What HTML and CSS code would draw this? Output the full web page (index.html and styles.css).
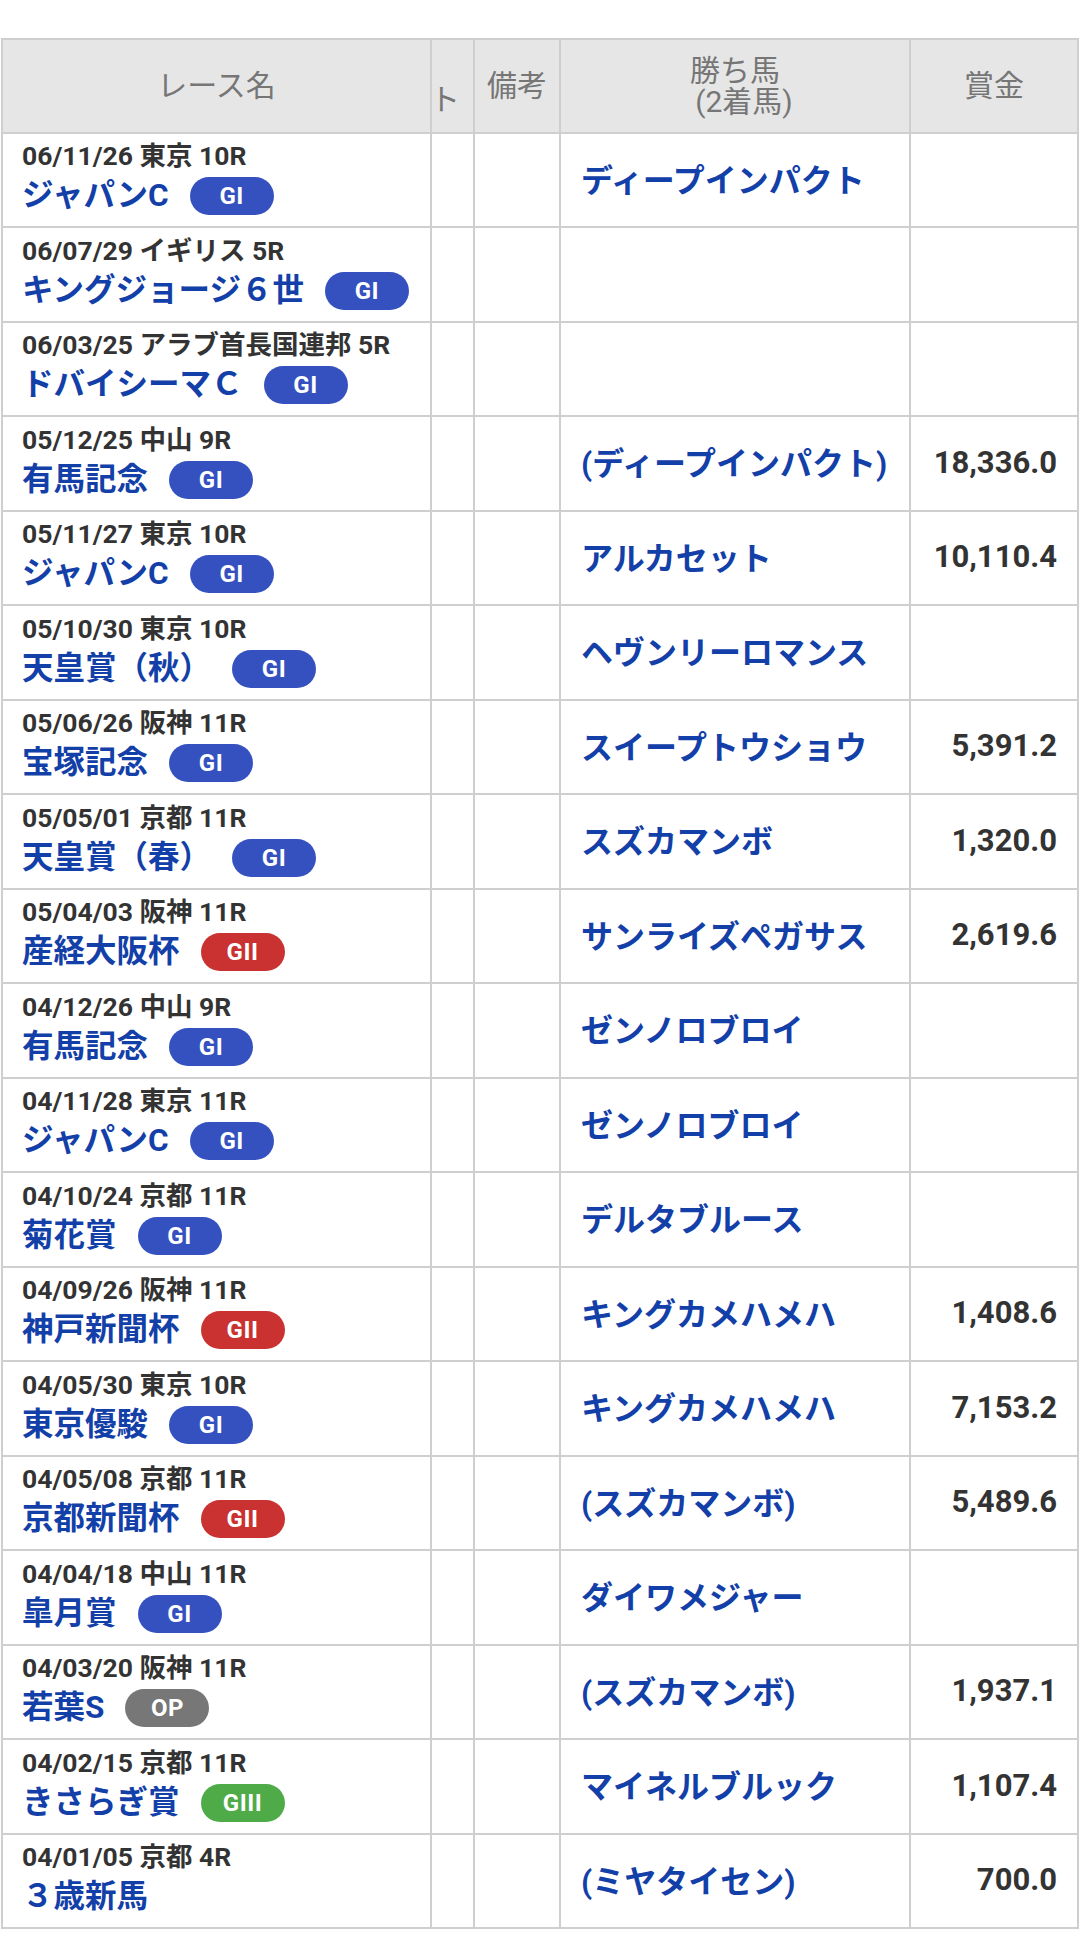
FILE: index.html
```html
<!DOCTYPE html>
<html lang="ja">
<head>
<meta charset="utf-8">
<title>レース成績</title>
<link rel="stylesheet" href="styles.css">
</head>
<body>
<div class="tbl">
  <div class="th">レース名</div>
  <div class="th th-clip"><span class="clip-glyph">ト</span></div>
  <div class="th">備考</div>
  <div class="th th-2line"><span>勝ち馬</span><span class="sub">(2着馬)</span></div>
  <div class="th">賞金</div>

  <div class="td race"><div class="date">06/11/26 東京 10R</div><div class="name"><span>ジャパンC</span><span class="badge g1">GI</span></div></div>
  <div class="td"></div><div class="td"></div>
  <div class="td horse">ディープインパクト</div>
  <div class="td prize"></div>

  <div class="td race"><div class="date">06/07/29 イギリス 5R</div><div class="name"><span>キングジョージ６世</span><span class="badge g1">GI</span></div></div>
  <div class="td"></div><div class="td"></div>
  <div class="td horse"></div>
  <div class="td prize"></div>

  <div class="td race"><div class="date">06/03/25 アラブ首長国連邦 5R</div><div class="name"><span>ドバイシーマＣ</span><span class="badge g1">GI</span></div></div>
  <div class="td"></div><div class="td"></div>
  <div class="td horse"></div>
  <div class="td prize"></div>

  <div class="td race"><div class="date">05/12/25 中山 9R</div><div class="name"><span>有馬記念</span><span class="badge g1">GI</span></div></div>
  <div class="td"></div><div class="td"></div>
  <div class="td horse">(ディープインパクト)</div>
  <div class="td prize">18,336.0</div>

  <div class="td race"><div class="date">05/11/27 東京 10R</div><div class="name"><span>ジャパンC</span><span class="badge g1">GI</span></div></div>
  <div class="td"></div><div class="td"></div>
  <div class="td horse">アルカセット</div>
  <div class="td prize">10,110.4</div>

  <div class="td race"><div class="date">05/10/30 東京 10R</div><div class="name"><span>天皇賞（秋）</span><span class="badge g1">GI</span></div></div>
  <div class="td"></div><div class="td"></div>
  <div class="td horse">ヘヴンリーロマンス</div>
  <div class="td prize"></div>

  <div class="td race"><div class="date">05/06/26 阪神 11R</div><div class="name"><span>宝塚記念</span><span class="badge g1">GI</span></div></div>
  <div class="td"></div><div class="td"></div>
  <div class="td horse">スイープトウショウ</div>
  <div class="td prize">5,391.2</div>

  <div class="td race"><div class="date">05/05/01 京都 11R</div><div class="name"><span>天皇賞（春）</span><span class="badge g1">GI</span></div></div>
  <div class="td"></div><div class="td"></div>
  <div class="td horse">スズカマンボ</div>
  <div class="td prize">1,320.0</div>

  <div class="td race"><div class="date">05/04/03 阪神 11R</div><div class="name"><span>産経大阪杯</span><span class="badge g2">GII</span></div></div>
  <div class="td"></div><div class="td"></div>
  <div class="td horse">サンライズペガサス</div>
  <div class="td prize">2,619.6</div>

  <div class="td race"><div class="date">04/12/26 中山 9R</div><div class="name"><span>有馬記念</span><span class="badge g1">GI</span></div></div>
  <div class="td"></div><div class="td"></div>
  <div class="td horse">ゼンノロブロイ</div>
  <div class="td prize"></div>

  <div class="td race"><div class="date">04/11/28 東京 11R</div><div class="name"><span>ジャパンC</span><span class="badge g1">GI</span></div></div>
  <div class="td"></div><div class="td"></div>
  <div class="td horse">ゼンノロブロイ</div>
  <div class="td prize"></div>

  <div class="td race"><div class="date">04/10/24 京都 11R</div><div class="name"><span>菊花賞</span><span class="badge g1">GI</span></div></div>
  <div class="td"></div><div class="td"></div>
  <div class="td horse">デルタブルース</div>
  <div class="td prize"></div>

  <div class="td race"><div class="date">04/09/26 阪神 11R</div><div class="name"><span>神戸新聞杯</span><span class="badge g2">GII</span></div></div>
  <div class="td"></div><div class="td"></div>
  <div class="td horse">キングカメハメハ</div>
  <div class="td prize">1,408.6</div>

  <div class="td race"><div class="date">04/05/30 東京 10R</div><div class="name"><span>東京優駿</span><span class="badge g1">GI</span></div></div>
  <div class="td"></div><div class="td"></div>
  <div class="td horse">キングカメハメハ</div>
  <div class="td prize">7,153.2</div>

  <div class="td race"><div class="date">04/05/08 京都 11R</div><div class="name"><span>京都新聞杯</span><span class="badge g2">GII</span></div></div>
  <div class="td"></div><div class="td"></div>
  <div class="td horse">(スズカマンボ)</div>
  <div class="td prize">5,489.6</div>

  <div class="td race"><div class="date">04/04/18 中山 11R</div><div class="name"><span>皐月賞</span><span class="badge g1">GI</span></div></div>
  <div class="td"></div><div class="td"></div>
  <div class="td horse">ダイワメジャー</div>
  <div class="td prize"></div>

  <div class="td race"><div class="date">04/03/20 阪神 11R</div><div class="name"><span>若葉S</span><span class="badge op">OP</span></div></div>
  <div class="td"></div><div class="td"></div>
  <div class="td horse">(スズカマンボ)</div>
  <div class="td prize">1,937.1</div>

  <div class="td race"><div class="date">04/02/15 京都 11R</div><div class="name"><span>きさらぎ賞</span><span class="badge g3">GIII</span></div></div>
  <div class="td"></div><div class="td"></div>
  <div class="td horse">マイネルブルック</div>
  <div class="td prize">1,107.4</div>

  <div class="td race"><div class="date">04/01/05 京都 4R</div><div class="name"><span>３歳新馬</span></div></div>
  <div class="td"></div><div class="td"></div>
  <div class="td horse">(ミヤタイセン)</div>
  <div class="td prize">700.0</div>
</div>
</body>
</html>
```
FILE: styles.css
```css
html, body {
  margin: 0;
  padding: 0;
  background: #ffffff;
}

body {
  font-family: Roboto, "Noto Sans CJK JP", sans-serif;
}

.tbl {
  display: grid;
  grid-template-columns: 427px 41px 84px 348px 166px;
  grid-template-rows: 91.5px;
  grid-auto-rows: 92.5px;
  gap: 2px;
  padding: 2px;
  background: #cfcfcf;
  width: max-content;
  margin: 38px 0 0 1px;
}

.th {
  background: #e6e6e6;
  color: #767676;
  font-size: 30px;
  font-weight: 400;
  line-height: 30px;
  display: flex;
  align-items: center;
  justify-content: center;
  text-align: center;
  white-space: nowrap;
}

.th-clip {
  align-items: flex-start;
  justify-content: flex-start;
  padding-top: 45px;
}

.clip-glyph {
  margin-left: -2px;
}

.th-2line {
  flex-direction: column;
  line-height: 31px;
}

.th-2line .sub {
  padding-left: 18px;
}

.td {
  background: #ffffff;
  overflow: hidden;
  white-space: nowrap;
}

.race {
  padding: 6.5px 0 0 19px;
  display: flex;
  flex-direction: column;
}

.date {
  font-size: 26.5px;
  font-weight: 700;
  line-height: 32px;
  color: #333333;
}

.name {
  display: flex;
  align-items: center;
  height: 48px;
  font-size: 31.5px;
  font-weight: 700;
  line-height: 48px;
  color: #1340a8;
}

.badge {
  margin-left: 21px;
  width: 84px;
  height: 38px;
  border-radius: 19px;
  color: #ffffff;
  font-size: 24px;
  font-weight: 700;
  line-height: 38px;
  text-align: center;
  letter-spacing: 0.5px;
}

.g1 { background: #3551c0; }
.g2 { background: #c93230; }
.g3 { background: #4fab48; }
.op { background: #777777; }

.horse {
  display: flex;
  align-items: center;
  padding: 0 0 4px 20px;
  font-size: 32px;
  font-weight: 700;
  color: #1340a8;
}

.prize {
  display: flex;
  align-items: center;
  justify-content: flex-end;
  padding: 0 20px 2px 0;
  font-size: 31px;
  font-weight: 700;
  color: #333333;
}
```
